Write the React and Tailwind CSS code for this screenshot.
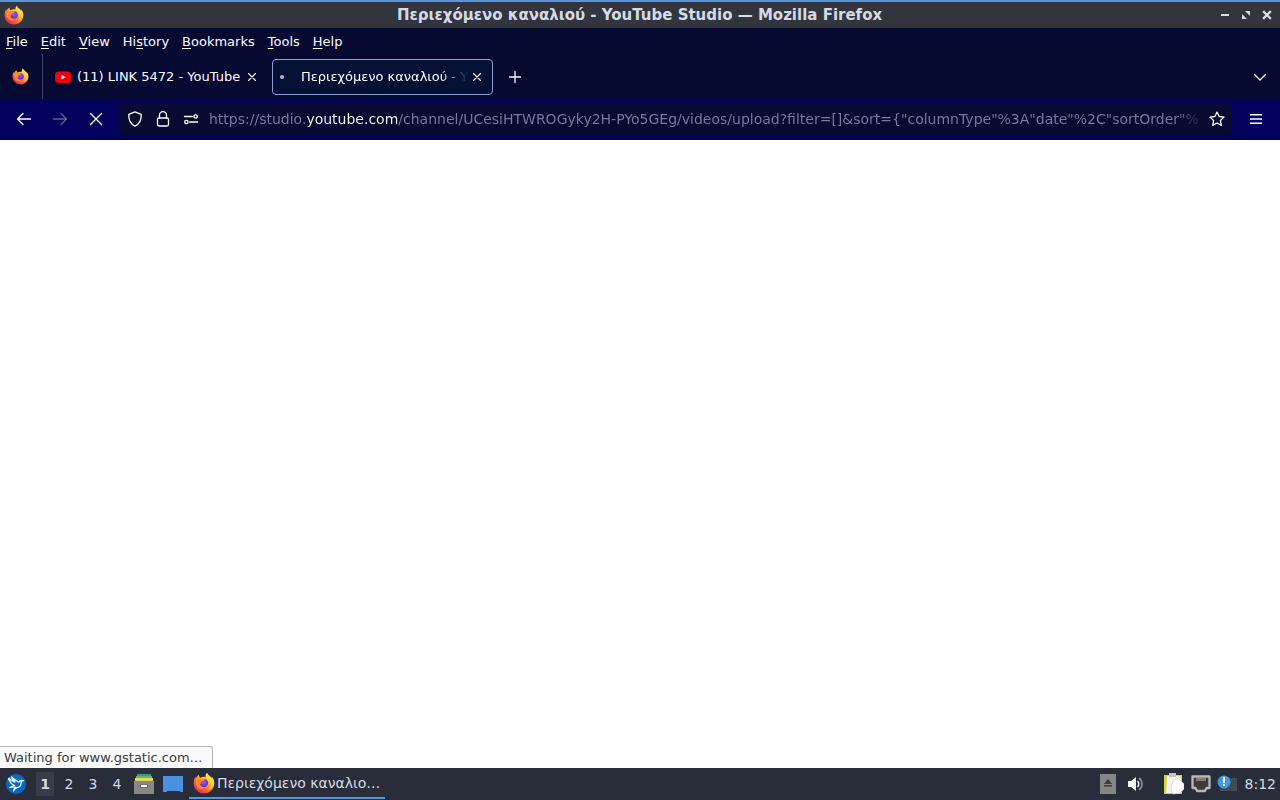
import React from "react";

function FirefoxLogo({ className, id }) {
  return (
    <svg viewBox="0 0 32 32" className={className} aria-hidden="true">
      <defs>
        <linearGradient id={id + "-body"} x1="0.85" y1="0.05" x2="0.2" y2="0.95">
          <stop offset="0" stopColor="#fff36b" />
          <stop offset="0.35" stopColor="#ffc02e" />
          <stop offset="0.65" stopColor="#ff6b35" />
          <stop offset="1" stopColor="#e8265e" />
        </linearGradient>
        <radialGradient id={id + "-globe"} cx="0.5" cy="0.4" r="0.6">
          <stop offset="0" stopColor="#9a59ff" />
          <stop offset="1" stopColor="#5b2bb5" />
        </radialGradient>
      </defs>
      <path
        d="M20.500 1c-2 2.200-2.600 4.300-2 6.200C15.500 6.600 12.500 7 10.600 8.300 9.200 7.600 8.600 5.800 8.800 4 6.500 5.300 4.800 7.500 4.200 9.500 3.500 8.800 3.400 7.600 3.500 6.800 1.800 9.500 1 12.800 1 16.200 1 24.400 7.700 31 16 31s15-6.600 15-14.800c0-3.700-1.600-7.400-3.800-9.500.5 1.300.7 2.500.7 3.300C26.200 5.800 21.300 4.800 20.500 1z"
        fill={`url(#${id}-body)`}
      />
      <circle cx="16" cy="16" r="6" fill={`url(#${id}-globe)`} />
      <path
        d="M4.500 10c2.500-1.600 5.200-1.500 7.300-.2 2.200-.3 4.200.2 5.200 1.500-.6 1.700-3.800 1.800-4.600 3 .5 2.200-1.600 2.200-2.400 3.700.6 3.500 4.400 4.700 8 3.600-2 3.200-7.500 4.300-11 .8C4 19.500 3.300 14 4.500 10z"
        fill="#ff8a30"
      />
      <path d="M20 7c3.500 2 6 5.500 5.300 10.500 1.500-1.300 1.900-3 1.700-4.700 1.500 4.700-.6 10.500-6 12.700 8-.5 10-10 6.900-15.500C26.200 5.800 21.300 4.800 20.500 1c-1.500 2-2.200 4-.5 6z" fill="#ffdc3e" opacity="0.850" />
    </svg>
  );
}

function Icon({ children, className = "size-4", width = 1.3 }) {
  return (
    <svg
      viewBox="0 0 16 16"
      className={className}
      fill="none"
      stroke="currentColor"
      strokeWidth={width}
      strokeLinecap="round"
      strokeLinejoin="round"
      aria-hidden="true"
    >
      {children}
    </svg>
  );
}

const menus = [
  ["", "F", "ile"],
  ["", "E", "dit"],
  ["", "V", "iew"],
  ["Hi", "s", "tory"],
  ["", "B", "ookmarks"],
  ["", "T", "ools"],
  ["", "H", "elp"],
];

function TitleBar() {
  return (
    <header className="flex h-7 items-center border-t-2 border-[#5794dc] bg-[#32353e] px-1 pr-[5px] text-[#d5dae5]">
      <div className="flex flex-1">
        <FirefoxLogo id="title" className="size-5" />
      </div>
      <h1 className="text-[15px] leading-5 font-bold whitespace-nowrap">
        Περιεχόμενο καναλιού - YouTube Studio — Mozilla Firefox
      </h1>
      <div className="flex flex-1 justify-end gap-[5px]">
        <button aria-label="Minimize" className="flex size-4 items-center justify-center">
          <svg viewBox="0 0 16 16" className="size-4" fill="currentColor"><path d="M4 7h8v2H4z" /></svg>
        </button>
        <button aria-label="Restore" className="flex size-4 items-center justify-center">
          <svg viewBox="0 0 16 16" className="size-4" fill="currentColor"><path d="M7 4h5v5zM4 7l5 5H4z" /></svg>
        </button>
        <button aria-label="Close window" className="flex size-4 items-center justify-center">
          <Icon width={2.4}><path d="M5 5l6 6M11 5l-6 6" strokeLinecap="square" /></Icon>
        </button>
      </div>
    </header>
  );
}

function MenuBar() {
  return (
    <nav className="flex h-[26px] items-center gap-[13px] px-[6px] text-[13px] leading-[21px]">
      {menus.map(([before, key, after]) => (
        <button key={before + key + after} className="whitespace-nowrap">
          {before}
          <span className="underline decoration-1 underline-offset-2">{key}</span>
          {after}
        </button>
      ))}
    </nav>
  );
}

function TabStrip() {
  return (
    <div className="flex h-[45px] items-center text-[13px] leading-[21px]">
      <button aria-label="Firefox View" className="flex h-full w-[43px] items-center justify-center border-r border-[#3b3f66] pr-[2px]">
        <FirefoxLogo id="view" className="size-[17px]" />
      </button>
      <div className="flex h-9 w-[229px] items-center pr-3 pl-3">
        <button className="flex min-w-0 flex-1 items-center gap-[6px]">
          <svg viewBox="0 0 16 16" className="size-4 shrink-0" aria-hidden="true">
            <rect x="0" y="2.500" width="16" height="11.500" rx="3.500" fill="#f00010" />
            <path d="M6.500 6v4.500l4-2.200z" fill="#fff" />
          </svg>
          <span className="whitespace-nowrap">(11) LINK 5472 - YouTube</span>
        </button>
        <button aria-label="Close tab" className="flex size-4 shrink-0 items-center justify-center">
          <Icon width={1.1}><path d="M4.500 4.500l7 7M11.500 4.500l-7 7" /></Icon>
        </button>
      </div>
      <div className="flex h-9 w-[221px] items-center rounded-[4px] border border-[#8f9dd0] bg-[#041034] px-[7px]">
        <button className="flex min-w-0 flex-1 items-center">
          <span className="mr-[17px] size-1 shrink-0 rounded-full bg-[#a9b4e2]" />
          <span className="min-w-0 flex-1 text-left whitespace-nowrap [mask-image:linear-gradient(to_right,#000_calc(100%-28px),transparent)]">
            Περιεχόμενο καναλιού - Y
          </span>
        </button>
        <button aria-label="Close current tab" className="flex size-4 shrink-0 items-center justify-center">
          <Icon width={1.1}><path d="M4.500 4.500l7 7M11.500 4.500l-7 7" /></Icon>
        </button>
      </div>
      <button aria-label="New tab" className="ml-[14px] flex size-4 items-center justify-center">
        <Icon className="size-4"><path d="M8 2.500v11M2.500 8h11" /></Icon>
      </button>
      <button aria-label="List all tabs" className="mr-3 ml-auto flex size-4 items-center justify-center">
        <Icon><path d="M2.500 5.500L8 11l5.500-5.500" /></Icon>
      </button>
    </div>
  );
}

function NavBar() {
  return (
    <div className="flex h-[41px] items-center bg-[#02025c] pb-px pl-4">
      <div className="flex items-center gap-5">
        <button aria-label="Back"><Icon className="block size-4"><path d="M1.500 8h13M7 2.500L1.500 8 7 13.500" /></Icon></button>
        <button aria-label="Forward" disabled className="text-[#5d609b]"><Icon className="block size-4"><path d="M1.500 8h13M9 2.500L14.500 8 9 13.500" /></Icon></button>
        <button aria-label="Stop"><Icon className="block size-4"><path d="M2.500 2.500l11 11M13.500 2.500l-11 11" /></Icon></button>
      </div>
      <div className="ml-4 flex h-8 min-w-0 flex-1 items-center rounded-[4px] bg-[#080a32] pr-[7px] pl-[7px]">
        <div className="flex items-center gap-3">
          <button aria-label="Tracking protection"><Icon className="block size-4"><path d="M8 .9l6.200 2.400c.3 4.800-1.700 9.800-6.200 11.800C3.500 13.100 1.500 8.100 1.800 3.300z" /></Icon></button>
          <button aria-label="Site security"><Icon className="block size-4"><rect x="2.500" y="7" width="11" height="8" rx="1.500" /><path d="M4.500 7V4.200a3.500 3.500 0 0 1 7 0V7" /></Icon></button>
          <button aria-label="Permissions"><Icon className="block size-4"><path d="M1.500 5.500h8M6.500 11h8" /><circle cx="12.600" cy="5.500" r="1.700" /><circle cx="3.400" cy="11" r="1.700" /></Icon></button>
        </div>
        <input
          aria-label="Address"
          readOnly
          value={'https://studio.youtube.com/channel/UCesiHTWROGyky2H-PYo5GEg/videos/upload?filter=[]&sort={"columnType"%3A"date"%2C"sortOrder"%3A"DESCENDING"}'}
          className="mr-[10px] ml-[10px] min-w-0 flex-1 bg-[linear-gradient(to_right,#777aa5_97px,#fbfbfe_97px,#fbfbfe_189px,#777aa5_189px,#777aa5_calc(100%-24px),#777aa530)] bg-clip-text text-[14px] leading-5 text-transparent outline-none"
        />
        <button aria-label="Bookmark this page"><Icon className="block size-4"><path d="M8 1l2.100 4.500 4.900.6-3.600 3.400.9 4.900L8 12l-4.300 2.400.9-4.900L1 6.100l4.900-.6z" /></Icon></button>
      </div>
      <button aria-label="Open application menu" className="mx-4"><svg viewBox="0 0 16 16" className="block size-4" fill="currentColor" aria-hidden="true"><path d="M2 3h12v1.400H2zM2 7.300h12v1.400H2zM2 11.600h12V13H2z" /></svg></button>
    </div>
  );
}

function TaskBar() {
  return (
    <footer className="flex h-8 items-center bg-[#292d3a] text-[14px] leading-[21px] text-[#d3dae3]">
      <button aria-label="Applications" className="ml-[6px]">
        <svg viewBox="0 0 20 20" className="block size-5" aria-hidden="true">
          <circle cx="10" cy="10" r="10" fill="#0a68c0" />
          <path d="M2.500 4c2 2.500 4 3.600 6.500 4C7 6.500 6 5 5.500 3c2 2.800 5.500 3 7 5.500M2.500 4c.5 3.500 3 6 6 7.500-1.500.5-3 .8-4.500 2 2-.7 4-.6 5.500-.2C8.300 14.500 7.700 15.500 7.500 17c1-1.700 2-2.700 3.500-3.300 3-.5 4-2.500 4-5 0-1.200.7-1.800 2.500-2-1.700-.6-3.700-.3-4.500 1.500" fill="none" stroke="#e8f6ff" strokeWidth="1.300" strokeLinejoin="round" />
        </svg>
      </button>
      <div className="ml-[10px] flex gap-[6px]">
        <button className="h-6 w-[18px] bg-[#383b48] font-bold">1</button>
        <button className="h-6 w-[18px]">2</button>
        <button className="h-6 w-[18px]">3</button>
        <button className="h-6 w-[18px]">4</button>
      </div>
      <button aria-label="File manager" className="ml-[7px]">
        <svg viewBox="0 0 22 22" className="block size-[22px]" aria-hidden="true">
          <path d="M4 1h14v3H4z" fill="#2f9f86" />
          <path d="M3 3h16v3H3z" fill="#62b47e" />
          <path d="M2 5h18v4H2z" fill="#e8d35a" />
          <path d="M1 8h20v12a1 1 0 0 1-1 1H2a1 1 0 0 1-1-1z" fill="#858883" />
          <path d="M7 11h8v4H7z" fill="#72756f" />
          <path d="M8 12h6v2H8z" fill="#fff" />
        </svg>
      </button>
      <button aria-label="Show desktop" className="ml-2">
        <svg viewBox="0 0 20 18" className="block h-[18px] w-5" aria-hidden="true"><path d="M0 1h20v16h-3v-1H4v1H0z" fill="#4b91df" /></svg>
      </button>
      <button className="ml-[6px] flex h-[30px] w-[196px] items-center border-b-2 border-[#5794dc] pl-1">
        <FirefoxLogo id="task" className="size-[22px] shrink-0" />
        <span className="ml-[2px] whitespace-nowrap">Περιεχόμενο καναλιο…</span>
      </button>
      <div className="mr-1 ml-auto flex items-center">
        <button aria-label="Removable media" className="mr-3">
          <svg viewBox="0 0 16 20" className="block h-5 w-4" aria-hidden="true"><path d="M0 0h16v20H0z" fill="#858588" /><path d="M8 5l4 5H4zM4 11h8v1.500H4z" fill="#3b3c42" /></svg>
        </button>
        <button aria-label="Volume" className="mr-5">
          <svg viewBox="0 0 16 16" className="block size-4" fill="none" aria-hidden="true">
            <path d="M0 5h3l5-4v14l-5-4H0z" fill="#f3f5f8" />
            <path d="M9.500 5c1.700 1.700 1.700 4.300 0 6" stroke="#f3f5f8" strokeWidth="1.500" />
            <path d="M11 2c4 3 4 9 0 12" stroke="#858a95" strokeWidth="1.700" />
          </svg>
        </button>
        <button aria-label="Clipboard" className="mr-[7px]">
          <svg viewBox="0 0 20 22" className="block h-[22px] w-5" aria-hidden="true">
            <path d="M0 2h18v19H0z" fill="#d4d638" />
            <path d="M3 3h13l1 4v13H2z" fill="#f4f3ef" />
            <path d="M5 0h7v4H5z" fill="#c7c6bd" />
            <path d="M9 8l5-3 6 6v5l-4 4-7 1-2-5z" fill="#fff" stroke="#d5d3cd" strokeWidth="0.800" />
          </svg>
        </button>
        <button aria-label="Network" className="mr-[6px]">
          <svg viewBox="0 0 20 18" className="block h-[18px] w-5" aria-hidden="true">
            <path d="M1.500 1.500h17v11.500H15.500l-1.500 3H6l-1.500-3H1.500z" fill="#3c3d3b" stroke="#b8b9b8" strokeWidth="2.300" strokeLinejoin="round" />
            <path d="M6 3v3M8 3v3M10 3v3M12 3v3M14 3v3" stroke="#cbc9a6" />
          </svg>
        </button>
        <button aria-label="Notifications" className="mr-2">
          <svg viewBox="0 0 20 18" className="block h-[18px] w-5" aria-hidden="true">
            <path d="M3 3h17v13H3z" fill="#454954" />
            <circle cx="7" cy="7" r="6.500" fill="#3c9be2" />
            <path d="M6 2h2v6H6zM6 9h2v2H6z" fill="#fff" />
          </svg>
        </button>
        <time>8:12</time>
      </div>
    </footer>
  );
}

export default function App() {
  return (
    <div className="flex min-h-screen flex-col bg-white [font-family:'DejaVu_Sans',sans-serif]">
      <TitleBar />
      <div className="bg-[#060a30] text-[#fbfbfe]">
        <MenuBar />
        <TabStrip />
        <NavBar />
      </div>
      <main className="relative flex-1 bg-white">
        <div role="status" className="absolute bottom-0 left-0 h-[22px] rounded-tr-[3px] border-t border-r border-[#b5b5b5] bg-[#fafafa] pr-[9px] pl-1 text-[13px] leading-[21px] whitespace-nowrap text-[#3a3a3a]">
          Waiting for www.gstatic.com…
        </div>
      </main>
      <TaskBar />
    </div>
  );
}
